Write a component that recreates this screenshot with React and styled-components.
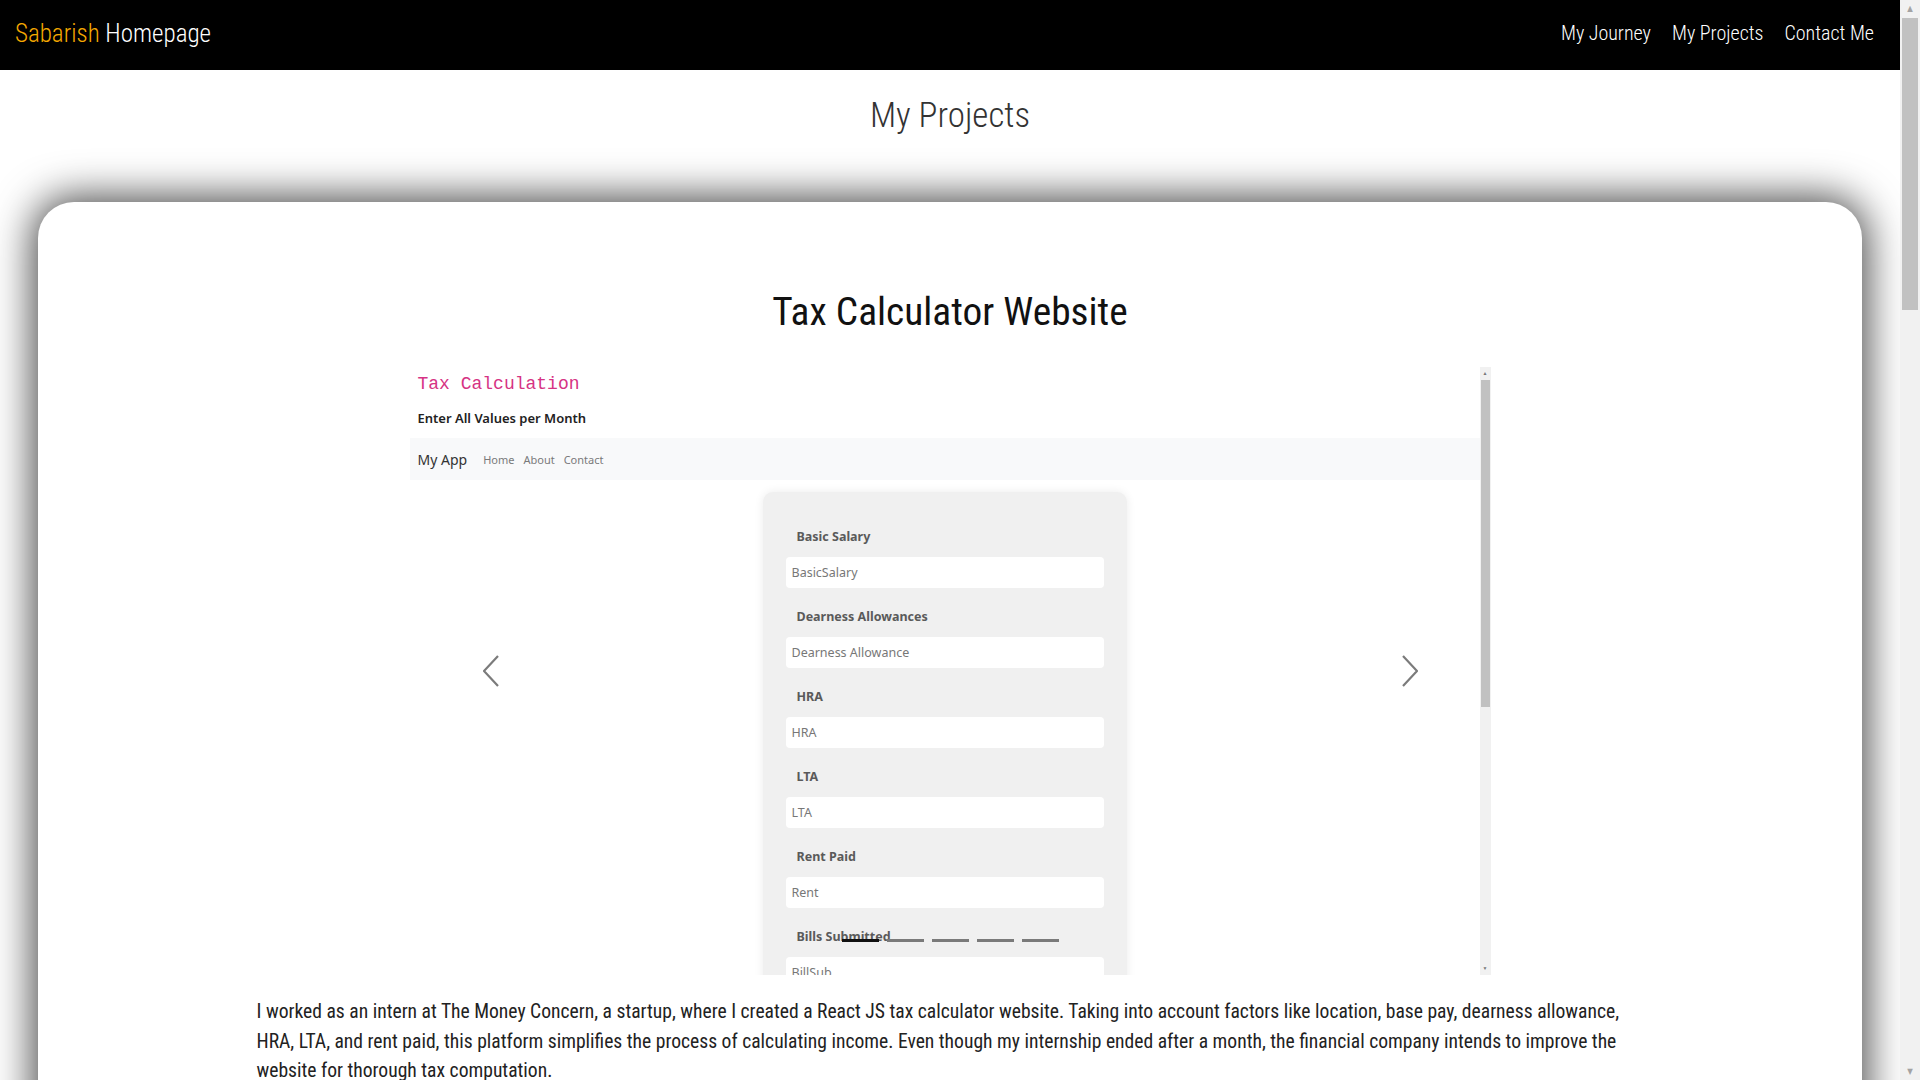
import { createGlobalStyle } from "styled-components";
import styled from "styled-components";

const GlobalStyle = createGlobalStyle`
  html, body {
    margin: 0;
    padding: 0;
    background: #ffffff;
  }
  html::-webkit-scrollbar {
    display: none;
  }
  body {
    font-family: "Roboto Condensed", "Liberation Sans Narrow", Roboto, sans-serif;
    font-stretch: condensed;
    color: #222;
  }
`;

const fields = [
    { label: "Basic Salary", placeholder: "BasicSalary" },
    { label: "Dearness Allowances", placeholder: "Dearness Allowance" },
    { label: "HRA", placeholder: "HRA" },
    { label: "LTA", placeholder: "LTA" },
    { label: "Rent Paid", placeholder: "Rent" },
    { label: "Bills Submitted", placeholder: "BillSub" },
];

function Chevron({ dir }) {
    const points = dir === "left" ? "15,1 1,16 15,31" : "1,1 15,16 1,31";
    return (
        <svg width="16" height="32" viewBox="0 0 16 32">
            <polyline points={points} fill="none" stroke="#7b7b7b" strokeWidth="2.2" />
        </svg>
    );
}

function MockScreen() {
    return (
        <Shot>
            <MockPage>
                <MockHead>
                    <MockCode>Tax Calculation</MockCode>
                    <MockSub>Enter All Values per Month</MockSub>
                </MockHead>
                <MockNav>
                    <MockBrand>My App</MockBrand>
                    <MockLink>Home</MockLink>
                    <MockLink>About</MockLink>
                    <MockLink>Contact</MockLink>
                </MockNav>
                <FormArea>
                    <FormCard>
                        {fields.map((f) => (
                            <Group key={f.label}>
                                <FieldLabel>{f.label}</FieldLabel>
                                <FieldInput>{f.placeholder}</FieldInput>
                            </Group>
                        ))}
                    </FormCard>
                </FormArea>
            </MockPage>
            <FakeScroll>
                <ScrollArrow>▲</ScrollArrow>
                <ScrollThumb />
                <ScrollTrack />
                <ScrollArrow>▼</ScrollArrow>
            </FakeScroll>

            <Control side="left"><Chevron dir="left" /></Control>
            <Control side="right"><Chevron dir="right" /></Control>
            <Indicators>
                {[0, 1, 2, 3, 4].map((i) => (
                    <Dash key={i} active={i === 0} />
                ))}
            </Indicators>
        </Shot>
    );
}

export default function App() {
    return (
        <>
            <GlobalStyle />
            <Frame>
                <Main>
                    <TopBar>
                        <Brand>
                            <Gold>Sabarish</Gold> Homepage
                        </Brand>
                        <NavLinks>
                            <NavLink>My Journey</NavLink>
                            <NavLink>My Projects</NavLink>
                            <NavLink>Contact Me</NavLink>
                        </NavLinks>
                    </TopBar>

                    <PageTitle>My Projects</PageTitle>

                    <Card>
                        <ProjectTitle>Tax Calculator Website</ProjectTitle>
                        <MockScreen />
                        <Description>
                            I worked as an intern at The Money Concern, a startup, where I created a React JS tax calculator website. Taking into account factors like location, base pay, dearness allowance, HRA, LTA, and rent paid, this platform simplifies the process of calculating income. Even though my internship ended after a month, the financial company intends to improve the website for thorough tax computation.
                        </Description>
                    </Card>
                </Main>
                <PageRail>
                    <RailArrow>▲</RailArrow>
                    <RailThumb />
                    <RailTrack />
                    <RailArrow>▼</RailArrow>
                </PageRail>
            </Frame>
        </>
    );
}

const Frame = styled.div`
  display: flex;
  align-items: flex-start;
`;

const Main = styled.main`
  flex: 1;
  min-width: 0;
`;

const PageRail = styled.aside`
  position: sticky;
  top: 0;
  width: 20px;
  height: 100vh;
  background: #f1f1f1;
  display: flex;
  flex-direction: column;
  align-items: center;
`;

const RailArrow = styled.div`
  height: 17px;
  line-height: 17px;
  font-size: 8px;
  color: #a3a3a3;
  font-family: "DejaVu Sans", sans-serif;
`;

const RailThumb = styled.div`
  width: 16px;
  height: 292px;
  background: #c1c1c1;
  margin-top: 1px;
`;

const RailTrack = styled.div`
  flex: 1;
`;

const TopBar = styled.nav`
  height: 70px;
  background: #000;
  display: flex;
  align-items: center;
  justify-content: space-between;
  padding: 0 26px 0 15px;
`;

const Brand = styled.div`
  font-size: 25px;
  font-weight: 300;
  color: #fff;
  padding-bottom: 4px;
`;

const Gold = styled.span`
  color: #f5a800;
`;

const NavLinks = styled.div`
  display: flex;
  gap: 21px;
  padding-bottom: 4px;
`;

const NavLink = styled.span`
  font-size: 20px;
  font-weight: 300;
  color: #fff;
`;

const PageTitle = styled.h2`
  margin: 25px 0 0;
  text-align: center;
  font-size: 35px;
  line-height: 42px;
  font-weight: 300;
  color: #333;
`;

const Card = styled.section`
  margin: 65px 2% 0;
  background: #fff;
  border-radius: 36px;
  box-shadow: 0 0 40px 5px rgba(0, 0, 0, 0.72);
  padding: 86px 0 60px;
  display: flex;
  flex-direction: column;
  align-items: center;
`;

const ProjectTitle = styled.h1`
  margin: 0 0 31px;
  font-size: 39.4px;
  line-height: 48px;
  font-weight: 400;
  color: #111;
`;

const Description = styled.p`
  width: 1387px;
  margin: 22px 0 0;
  font-size: 19.6px;
  line-height: 29.5px;
  color: #222;
`;

const Shot = styled.div`
  position: relative;
  width: 1081px;
  height: 608px;
  display: flex;
  overflow: hidden;
  background: #fff;
`;

const MockPage = styled.div`
  flex: 1;
  overflow: hidden;
  font-family: "Noto Sans", "Open Sans", sans-serif;
  font-stretch: normal;
`;

const MockHead = styled.div`
  padding: 6px 8px 10px;
`;

const MockCode = styled.div`
  font-family: "Liberation Mono", monospace;
  font-size: 18px;
  line-height: 22px;
  color: #d63384;
`;

const MockSub = styled.div`
  margin-top: 13px;
  font-size: 13px;
  line-height: 20px;
  font-weight: 600;
  color: #222;
`;

const MockNav = styled.div`
  height: 42px;
  background: #f8f9fa;
  display: flex;
  align-items: center;
  padding: 0 8px;
`;

const MockBrand = styled.span`
  font-size: 14px;
  color: #333;
  margin-right: 16px;
`;

const MockLink = styled.span`
  font-size: 11px;
  color: #7a7a7a;
  margin-right: 9px;
`;

const FormArea = styled.div`
  display: flex;
  justify-content: center;
  padding-top: 12px;
`;

const FormCard = styled.div`
  width: 318px;
  padding: 36px 23px 20px;
  background: #f0f0f0;
  border-radius: 10px;
  box-shadow: 0 0 10px rgba(0, 0, 0, 0.08);
`;

const Group = styled.div`
  margin-bottom: 20px;
`;

const FieldLabel = styled.div`
  font-size: 12.5px;
  line-height: 18px;
  font-weight: 700;
  color: #5a5a5a;
  padding-left: 11px;
  margin-bottom: 11px;
`;

const FieldInput = styled.div`
  height: 31px;
  background: #fff;
  border-radius: 4px;
  display: flex;
  align-items: center;
  padding-left: 6px;
  font-size: 12.5px;
  color: #777;
`;

const FakeScroll = styled.div`
  width: 11px;
  background: #f1f1f1;
  display: flex;
  flex-direction: column;
  align-items: center;
`;

const ScrollArrow = styled.div`
  font-size: 5px;
  line-height: 13px;
  height: 13px;
  color: #777;
`;

const ScrollThumb = styled.div`
  width: 9px;
  height: 327px;
  background: #c1c1c1;
`;

const ScrollTrack = styled.div`
  flex: 1;
`;

const Control = styled.div`
  position: absolute;
  top: 0;
  bottom: 0;
  ${(p) => (p.side === "left" ? "left: 0;" : "right: 0;")}
  width: 162px;
  display: flex;
  align-items: center;
  justify-content: center;
`;

const Indicators = styled.div`
  position: absolute;
  left: 0;
  right: 0;
  bottom: 33px;
  display: flex;
  justify-content: center;
  gap: 8px;
`;

const Dash = styled.span`
  width: 37px;
  height: 3px;
  background: ${(p) => (p.active ? "#111" : "#7a7a7a")};
`;
